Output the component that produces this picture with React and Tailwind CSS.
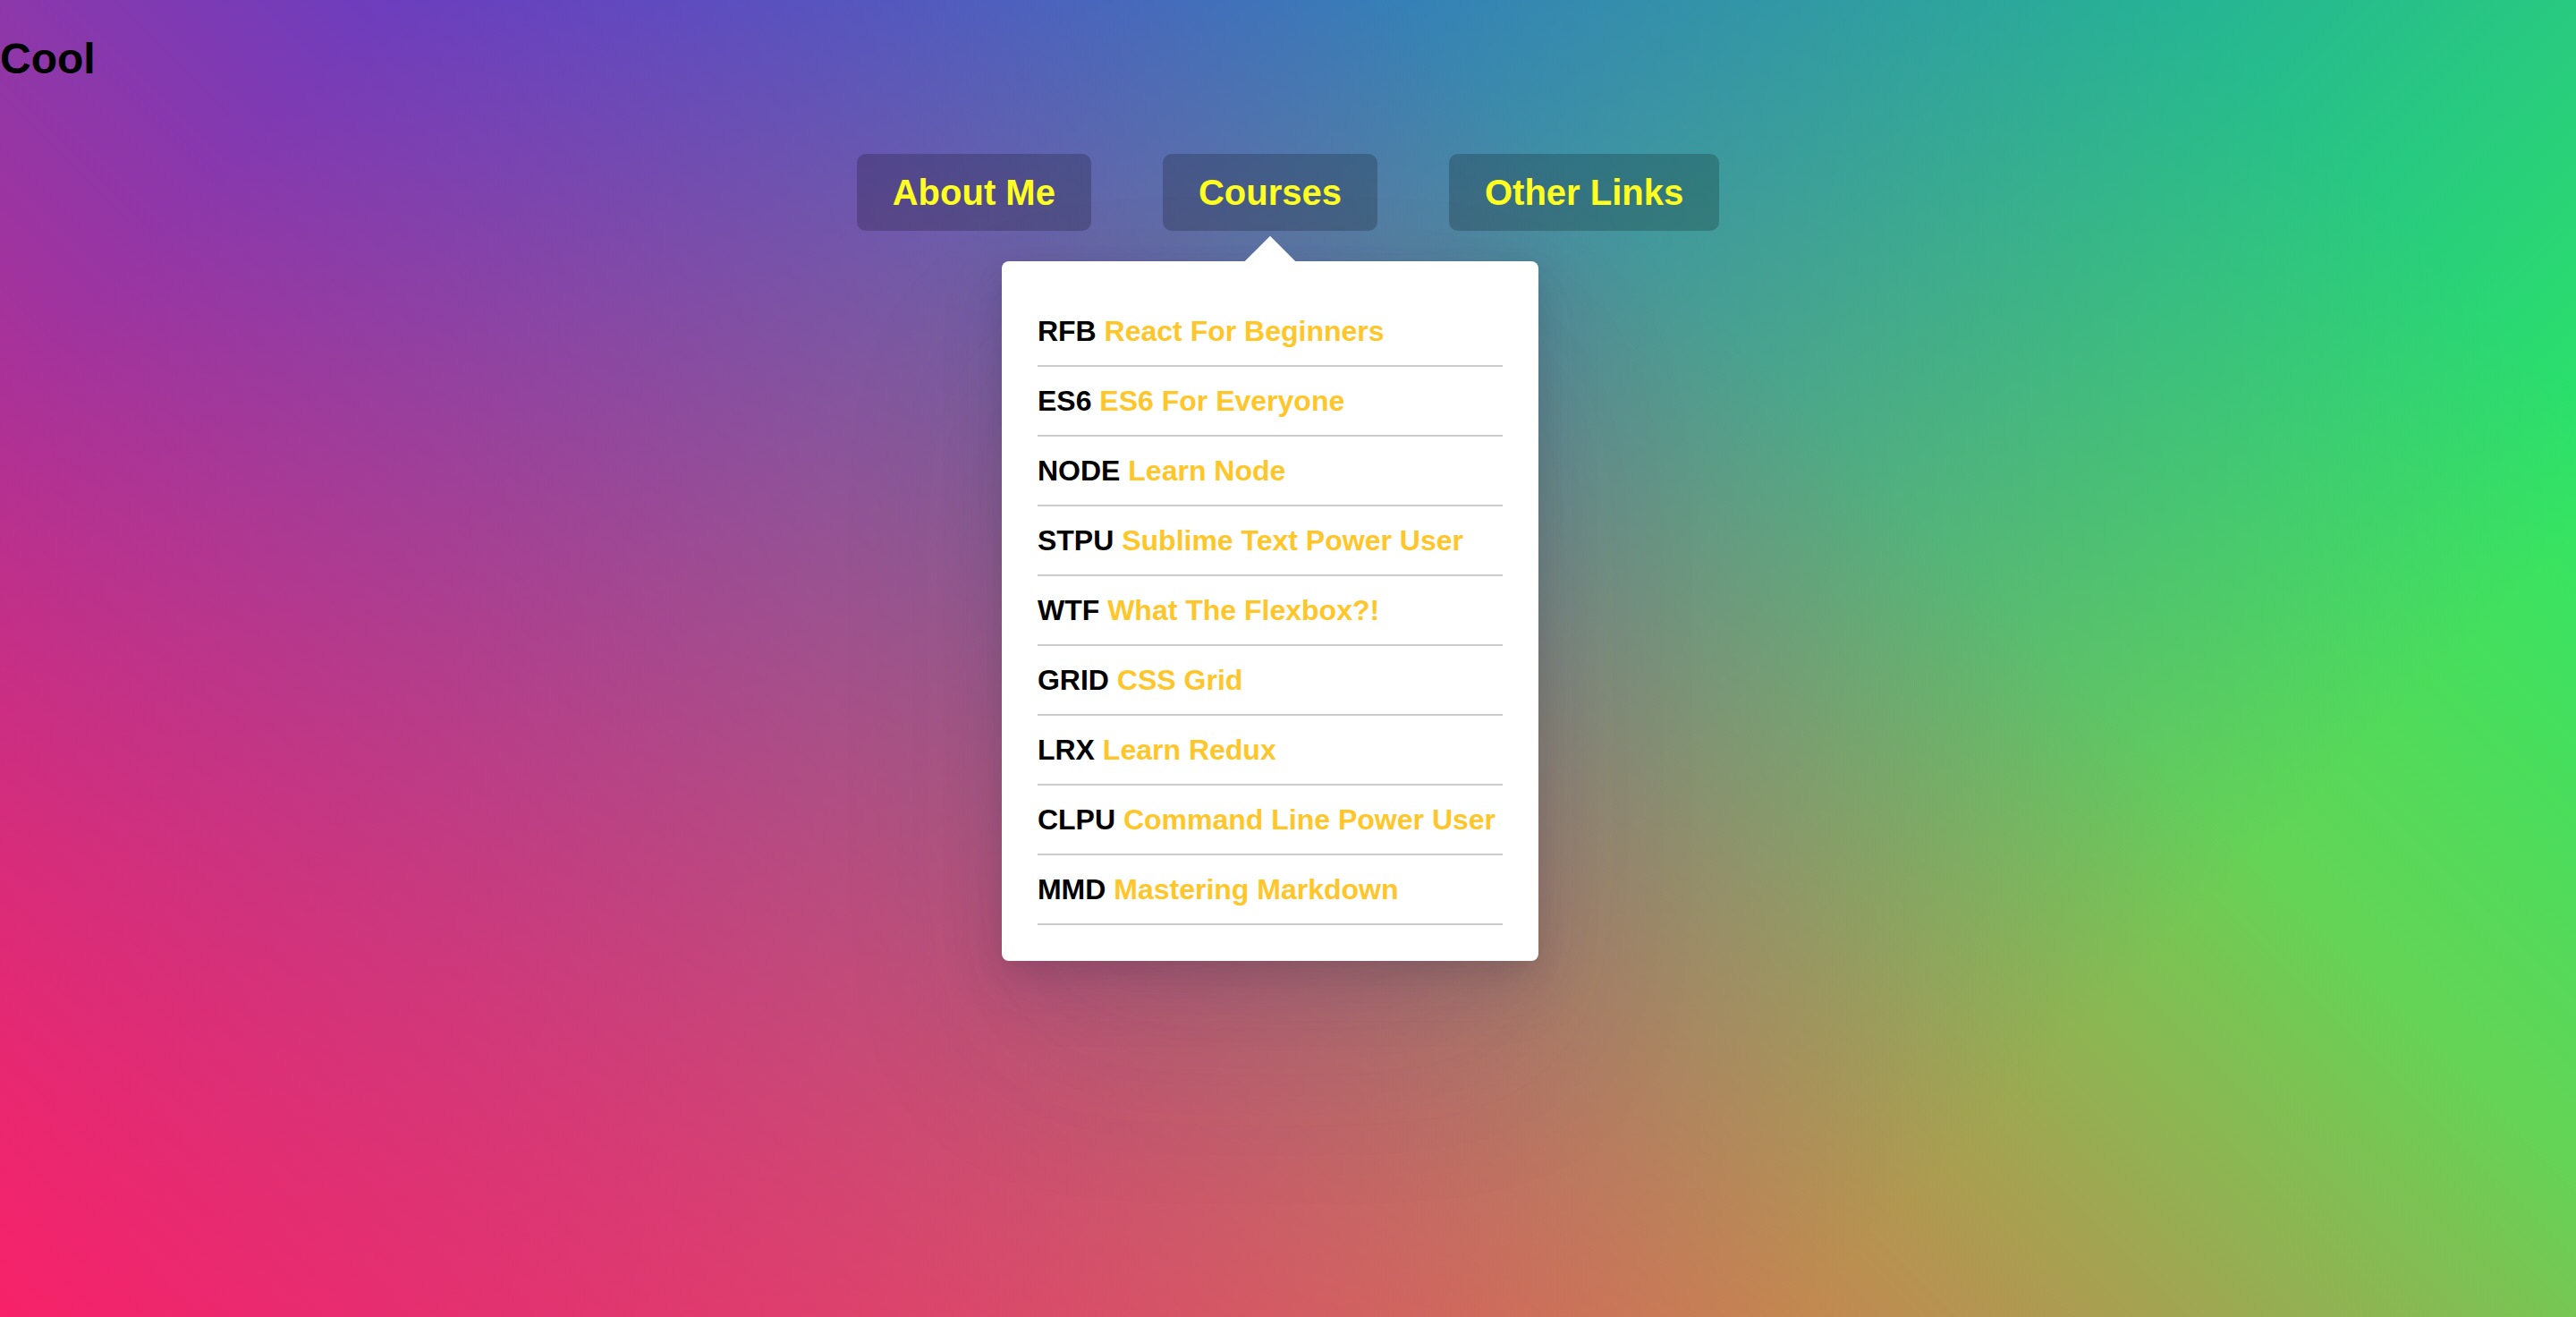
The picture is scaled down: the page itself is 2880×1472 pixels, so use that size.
const courses = [
  ["RFB", "React For Beginners"],
  ["ES6", "ES6 For Everyone"],
  ["NODE", "Learn Node"],
  ["STPU", "Sublime Text Power User"],
  ["WTF", "What The Flexbox?!"],
  ["GRID", "CSS Grid"],
  ["LRX", "Learn Redux"],
  ["CLPU", "Command Line Power User"],
  ["MMD", "Mastering Markdown"],
];

function NavLink({ children }) {
  return (
    <a
      href="#"
      className="m-[40px] inline-block rounded-[10px] bg-black/20 px-[40px] py-[20px] text-[40px] leading-[46px] text-[#ffff22] no-underline"
    >
      {children}
    </a>
  );
}

export default function App() {
  return (
    <div className="min-h-screen bg-[linear-gradient(45deg,hsla(340,93%,55%,1)_0%,hsla(340,93%,55%,0)_70%),linear-gradient(135deg,hsla(225,88%,52%,1)_10%,hsla(225,88%,52%,0)_80%),linear-gradient(225deg,hsla(138,80%,54%,1)_10%,hsla(138,80%,54%,0)_80%),linear-gradient(315deg,hsla(35,88%,57%,1)_100%,hsla(35,88%,57%,0)_70%)] font-['Liberation_Sans',Arial,sans-serif] font-bold text-black">
      <h2 className="m-0 mb-[39px] pt-[38px] text-[48px] leading-[55px]">Cool</h2>

      <nav className="relative">
        <ul className="flex justify-center">
          <li className="relative flex justify-center">
            <NavLink>About Me</NavLink>
          </li>

          <li className="relative flex justify-center">
            <NavLink>Courses</NavLink>

            {/* open dropdown */}
            <div className="absolute left-1/2 top-[160px] w-[600px] -translate-x-1/2 rounded-[8px] bg-white p-[40px] shadow-[0_100px_200px_rgba(50,50,93,0.1),0_30px_70px_rgba(50,50,93,0.15),0_10px_30px_rgba(0,0,0,0.1)]">
              <span className="absolute left-1/2 top-0 block h-[40px] w-[40px] -translate-x-1/2 -translate-y-1/2 rotate-45 bg-white" />
              <ul className="relative">
                {courses.map(([code, name]) => (
                  <li
                    key={code}
                    className="block border-b-2 border-black/20 py-[20px] text-[32px] leading-[36px]"
                  >
                    {code}{" "}
                    <a href="#" className="text-[#ffc62a] no-underline">
                      {name}
                    </a>
                  </li>
                ))}
              </ul>
            </div>
          </li>

          <li className="relative flex justify-center">
            <NavLink>Other Links</NavLink>
          </li>
        </ul>
      </nav>
    </div>
  );
}
